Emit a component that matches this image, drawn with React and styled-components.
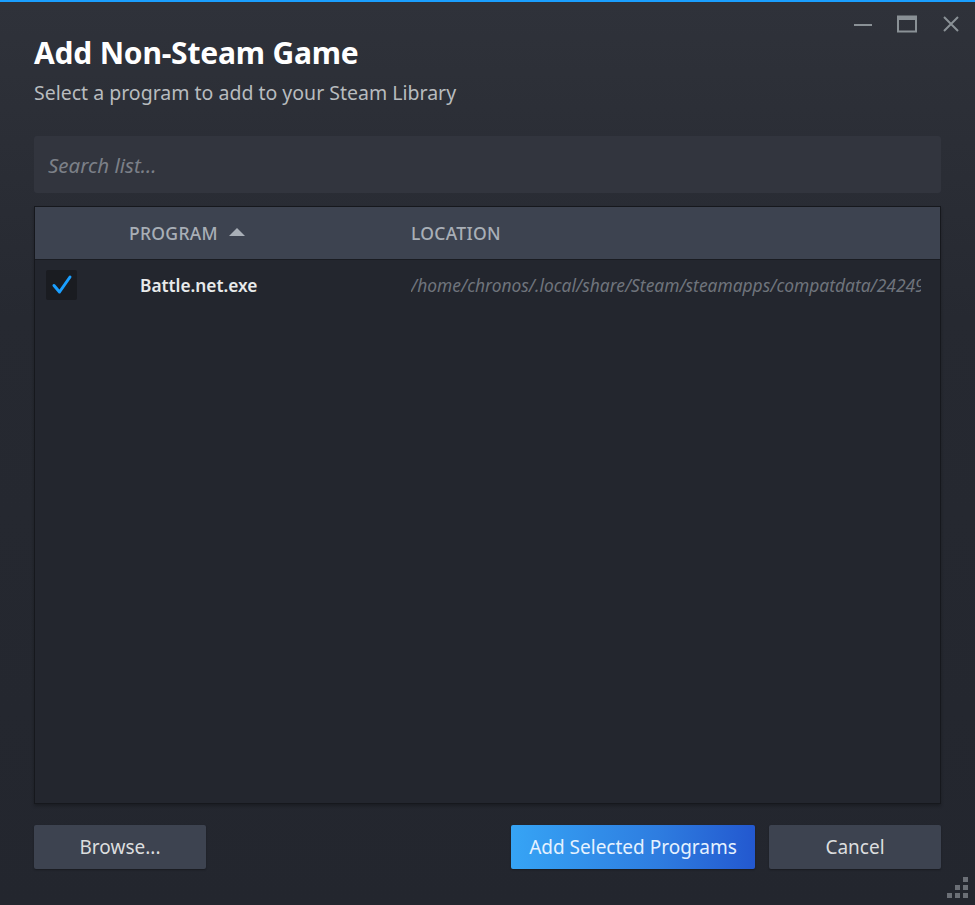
import React from 'react';
import styled, { createGlobalStyle } from 'styled-components';

const Global = createGlobalStyle`
  html, body { margin: 0; padding: 0; background: #23262e; }
  #root { width: 975px; height: 905px; }
  * { box-sizing: border-box; }
`;

const Window = styled.div`
  position: relative;
  width: 975px;
  height: 905px;
  display: flex;
  flex-direction: column;
  padding: 33px 34px 36px;
  background: linear-gradient(180deg, #2f323a 0%, #262931 35%, #23262e 100%);
  border-top: 2px solid #1a9fff;
  font-family: "Noto Sans", "Liberation Sans", sans-serif;
  color: #dcdedf;
`;

const Controls = styled.div`
  position: absolute;
  top: 12px;
  right: 12px;
  display: flex;
  align-items: center;
  gap: 20px;
`;

const ControlButton = styled.button`
  width: 24px;
  height: 20px;
  padding: 0;
  border: 0;
  background: none;
  display: flex;
  align-items: center;
  justify-content: center;
  color: #8a9196;
`;

const Title = styled.h1`
  margin: 0;
  font-size: 30px;
  line-height: 36px;
  font-weight: 700;
  color: #ffffff;
  letter-spacing: -0.2px;
`;

const Subtitle = styled.p`
  margin: 9px 0 0;
  font-size: 19.5px;
  line-height: 26px;
  color: #b8bcbf;
`;

const Search = styled.input`
  margin-top: 30px;
  height: 57px;
  width: 100%;
  border: 0;
  border-radius: 3px;
  padding: 0 14px;
  background: #32353e;
  color: #dcdedf;
  font-family: inherit;
  font-size: 20.5px;
  font-style: italic;
  outline: none;
  &::placeholder { color: #7c8088; }
`;

const List = styled.div`
  margin-top: 13px;
  flex: 1;
  display: flex;
  flex-direction: column;
  border: 1px solid #16181d;
  background: #23262e;
  box-shadow: 0 2px 3px rgba(0, 0, 0, 0.25);
  overflow: hidden;
`;

const HeaderRow = styled.div`
  height: 53px;
  display: grid;
  grid-template-columns: 94px 282px 1fr;
  align-items: center;
  background: #3d4350;
  border-bottom: 1px solid #1a1c22;
`;

const HeaderCell = styled.div`
  display: flex;
  align-items: center;
  gap: 11px;
  font-size: 17.5px;
  font-weight: 500;
  letter-spacing: 0.3px;
  color: #a9afb7;
  text-transform: uppercase;
`;

const SortArrow = styled.span`
  width: 0;
  height: 0;
  border-left: 8px solid transparent;
  border-right: 8px solid transparent;
  border-bottom: 8px solid #a9afb7;
  margin-bottom: 2px;
`;

const Row = styled.div`
  height: 50px;
  display: grid;
  grid-template-columns: 105px 271px 1fr;
  align-items: center;
  padding-right: 19px;
`;

const CheckCell = styled.div`
  padding-left: 11px;
`;

const Check = styled.div`
  width: 31px;
  height: 30px;
  border-radius: 2px;
  background: #1a1c21;
  display: flex;
  align-items: center;
  justify-content: center;
`;

const Name = styled.div`
  font-size: 17.3px;
  font-weight: 600;
  color: #e8eaeb;
`;

const Path = styled.div`
  font-size: 17.4px;
  font-style: italic;
  color: #6f747c;
  white-space: nowrap;
  overflow: hidden;
`;

const Footer = styled.div`
  margin-top: 21px;
  display: flex;
  align-items: center;
  gap: 14px;
`;

const Spacer = styled.div`
  flex: 1;
`;

const Button = styled.button`
  height: 44px;
  width: ${(p) => p.$width}px;
  border: 0;
  border-radius: 2px;
  font-family: inherit;
  font-size: 19px;
  color: ${(p) => (p.$primary ? '#e6f2ff' : '#dcdedf')};
  background: ${(p) =>
    p.$primary ? 'linear-gradient(90deg, #36a4f5 0%, #2e7de0 60%, #2358cf 100%)' : '#3d4350'};
  box-shadow: 0 1px 2px rgba(0, 0, 0, 0.3);
`;

const Grip = styled.div`
  position: absolute;
  right: 7px;
  bottom: 7px;
  display: grid;
  grid-template-columns: repeat(3, 5px);
  grid-template-rows: repeat(3, 5px);
  gap: 3px;
`;

const Dot = styled.span`
  background: ${(p) => (p.$on ? '#6b6f76' : 'transparent')};
`;

const gripPattern = [0, 0, 1, 0, 1, 1, 1, 1, 1];

export default function App() {
  return (
    <>
      <Global />
      <Window>
        <Controls>
          <ControlButton aria-label="minimize">
            <svg width="20" height="20" viewBox="0 0 20 20">
              <line x1="1" y1="11" x2="19" y2="11" stroke="#8a9196" strokeWidth="2" />
            </svg>
          </ControlButton>
          <ControlButton aria-label="maximize">
            <svg width="22" height="20" viewBox="0 0 22 20">
              <rect x="2" y="2.5" width="18" height="15" fill="none" stroke="#8a9196" strokeWidth="2" />
              <rect x="2" y="2" width="18" height="4" fill="#8a9196" />
            </svg>
          </ControlButton>
          <ControlButton aria-label="close">
            <svg width="20" height="20" viewBox="0 0 20 20">
              <path d="M3 3 L17 17 M17 3 L3 17" stroke="#8a9196" strokeWidth="2" />
            </svg>
          </ControlButton>
        </Controls>

        <Title>Add Non-Steam Game</Title>
        <Subtitle>Select a program to add to your Steam Library</Subtitle>

        <Search placeholder="Search list..." />

        <List>
          <HeaderRow>
            <span />
            <HeaderCell>
              Program <SortArrow />
            </HeaderCell>
            <HeaderCell>Location</HeaderCell>
          </HeaderRow>
          <Row>
            <CheckCell>
              <Check>
                <svg width="22" height="22" viewBox="0 0 22 22">
                  <path d="M3 11.5 L8.5 18 L19 3" fill="none" stroke="#1a9fff" strokeWidth="3" strokeLinecap="round" strokeLinejoin="round" />
                </svg>
              </Check>
            </CheckCell>
            <Name>Battle.net.exe</Name>
            <Path>/home/chronos/.local/share/Steam/steamapps/compatdata/2424959093/pfx/drive_c/Program Files (x86)/Battle.net/Battle.net.exe</Path>
          </Row>
        </List>

        <Footer>
          <Button $width={172}>Browse...</Button>
          <Spacer />
          <Button $primary $width={244}>Add Selected Programs</Button>
          <Button $width={172}>Cancel</Button>
        </Footer>

        <Grip>
          {gripPattern.map((on, i) => (
            <Dot key={i} $on={on} />
          ))}
        </Grip>
      </Window>
    </>
  );
}
